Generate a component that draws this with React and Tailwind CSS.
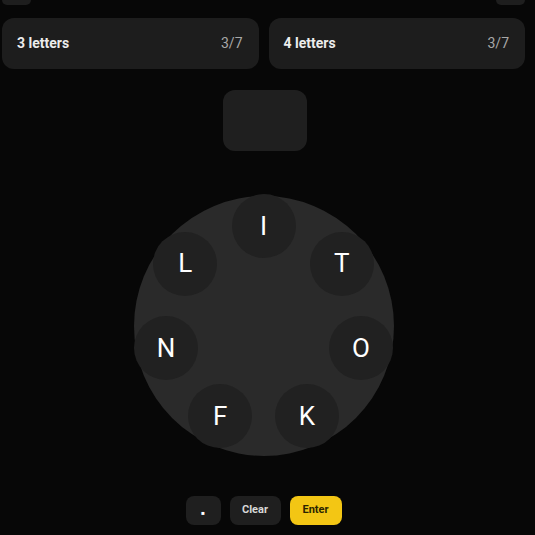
import React from 'react';

const LETTERS = ['I', 'T', 'O', 'K', 'F', 'N', 'L'];

const Wheel = () => {
    const size = 260;
    const radius = 100;
    return (
        <div className="relative h-[260px] w-[260px] rounded-full bg-[#2a2a2a]">
            {LETTERS.map((ch, i) => {
                const a = (-90 + (i * 360) / 7) * (Math.PI / 180);
                const x = size / 2 + radius * Math.cos(a);
                const y = size / 2 + radius * Math.sin(a);
                return (
                    <button
                        key={ch}
                        className="absolute flex h-[64px] w-[64px] -translate-x-1/2 -translate-y-1/2 items-center justify-center rounded-full bg-[#212121] text-[26px] text-white"
                        style={{ left: x, top: y }}
                    >
                        {ch}
                    </button>
                );
            })}
        </div>
    );
};

const App = () => {
    return (
        <div className="min-h-[535px] w-[535px] bg-[#070707] font-['Roboto','Liberation_Sans',sans-serif]">
            <div className="ml-[2px] flex w-[523px] flex-col items-center">
                {/* header buttons, scrolled mostly out of view */}
                <div className="flex w-full justify-between">
                    <div className="h-[5px] w-[29px] rounded-b-lg bg-[#1e1e1e]" />
                    <div className="h-[5px] w-[29px] rounded-b-lg bg-[#1e1e1e]" />
                </div>

                <div className="mt-[13px] grid w-full grid-cols-2 gap-[10px]">
                    <div className="flex h-[51px] items-center justify-between rounded-xl bg-[#1d1d1d] pl-[15px] pr-[16px]">
                        <span className="text-[14px] font-bold text-[#ececec]">3 letters</span>
                        <span className="text-[14px] text-[#a8a8a8]">3/7</span>
                    </div>
                    <div className="flex h-[51px] items-center justify-between rounded-xl bg-[#1d1d1d] pl-[15px] pr-[16px]">
                        <span className="text-[14px] font-bold text-[#ececec]">4 letters</span>
                        <span className="text-[14px] text-[#a8a8a8]">3/7</span>
                    </div>
                </div>

                <div className="mt-[21px] h-[61px] w-[84px] translate-x-[1px] rounded-xl bg-[#1f1f1f]" />

                <div className="mt-[45px]">
                    <Wheel />
                </div>

                <div className="mt-[40px] flex gap-[9px]">
                    <button className="flex h-[29px] w-[35px] items-center justify-center rounded-lg bg-[#1f1f1f] pt-[3px] text-[6px] text-white">
                        ■
                    </button>
                    <button className="h-[29px] w-[51px] rounded-lg bg-[#1f1f1f] text-[11px] font-bold text-[#d8d8d8]">
                        Clear
                    </button>
                    <button className="h-[29px] w-[52px] rounded-lg bg-[#f3c614] text-[11px] font-bold text-[#2a2400]">
                        Enter
                    </button>
                </div>
            </div>
        </div>
    );
};

export default App;
